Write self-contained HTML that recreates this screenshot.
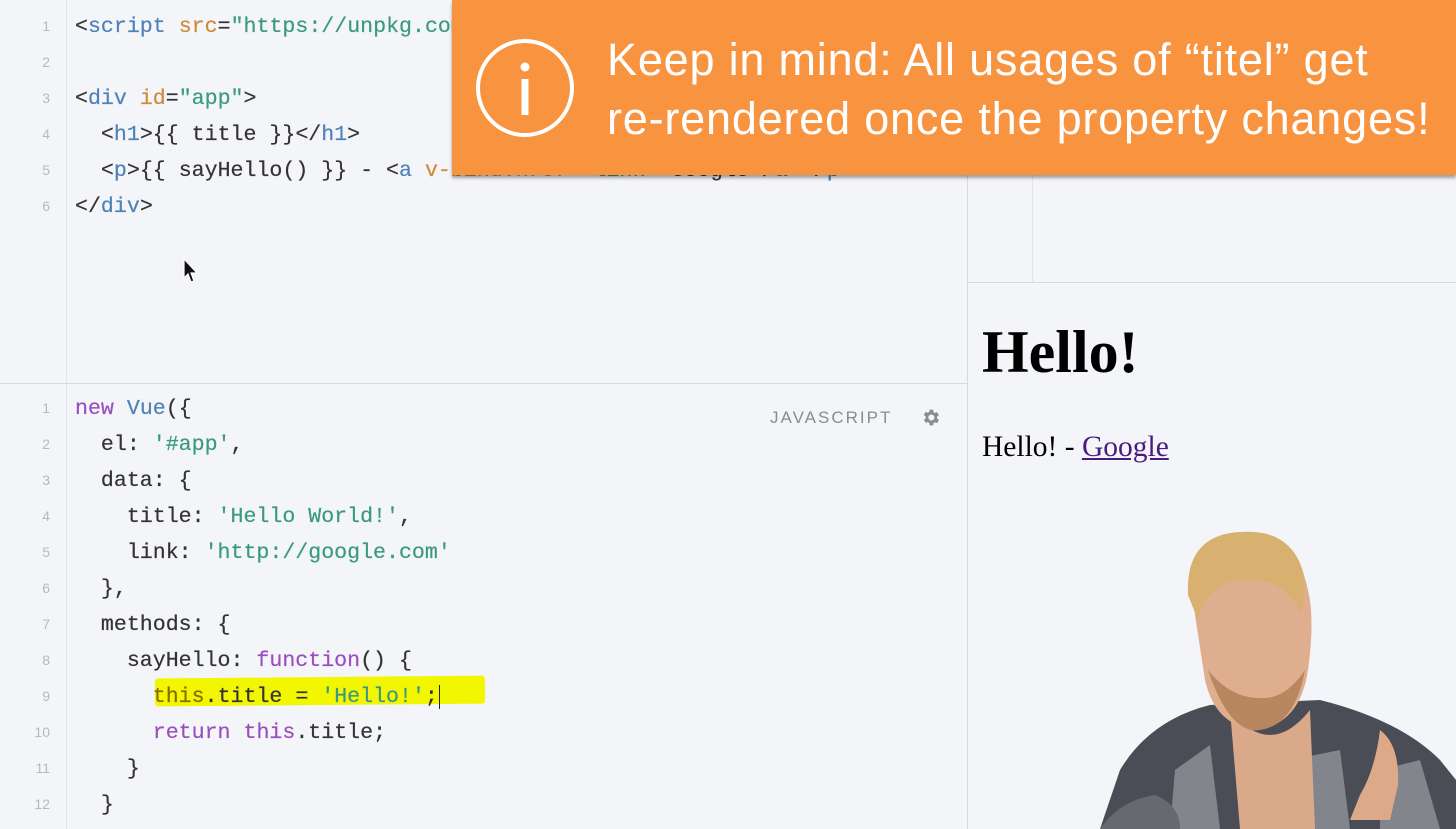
<!DOCTYPE html>
<html><head><style>
body{margin:0;width:1456px;height:829px;overflow:hidden;background:#f4f5f8;position:relative;font-family:"Liberation Mono",monospace}
.pane{position:absolute;left:0;width:967px;background:#f4f5f8}
.gut{position:absolute;left:0;top:0;bottom:0;width:66px;border-right:1px solid #e4e5e9}
.ln{position:absolute;left:0;width:50px;text-align:right;font-size:14px;color:#b8b9bd;font-family:"Liberation Sans",sans-serif}
.code{position:absolute;left:75px;font-size:21.6px;line-height:36px;color:#333;white-space:pre;-webkit-text-stroke:0.2px currentColor}
.t{color:#4f82b8}.a{color:#d08a3c}.s{color:#3a9a80}.k{color:#9b4fbf}.p{color:#555}
</style></head><body>
<div class="pane" style="top:0;height:383px;border-bottom:1px solid #d8d9dd">
<div class="gut"></div>
<div class="ln" style="top:18px">1</div><div class="ln" style="top:54px">2</div><div class="ln" style="top:90px">3</div><div class="ln" style="top:126px">4</div><div class="ln" style="top:162px">5</div><div class="ln" style="top:198px">6</div>
<div class="code" style="top:9px">&lt;<span class="t">script</span> <span class="a">src</span>=<span class="s">"https://unpkg.com/vue"</span>&gt;&lt;/<span class="t">script</span>&gt;

&lt;<span class="t">div</span> <span class="a">id</span>=<span class="s">"app"</span>&gt;
  &lt;<span class="t">h1</span>&gt;{{ title }}&lt;/<span class="t">h1</span>&gt;
  &lt;<span class="t">p</span>&gt;{{ sayHello() }} - &lt;<span class="t">a</span> <span class="a">v-bind:href</span>=<span class="s">"link"</span>&gt;Google&lt;/<span class="t">a</span>&gt;&lt;/<span class="t">p</span>&gt;
&lt;/<span class="t">div</span>&gt;</div>
<svg style="position:absolute;left:183px;top:258px" width="16" height="26" viewBox="0 0 16 26"><path d="M1 1 L1 20 L5 16 L8 24 L11 23 L8 15 L14 15 Z" fill="#111" stroke="#fff" stroke-width="1.2"/></svg>
</div>
<div class="pane" style="top:384px;height:445px">
<div class="gut"></div>
<div style="position:absolute;left:770px;top:24px;font-family:'Liberation Sans',sans-serif;font-size:17px;letter-spacing:2px;color:#8a8c92">JAVASCRIPT</div>
<svg style="position:absolute;left:920px;top:23px" width="21" height="21" viewBox="0 0 24 24"><path fill="#8a8c92" d="M19.4 13a7.5 7.5 0 0 0 0-2l2.1-1.6-2-3.5-2.5 1a7 7 0 0 0-1.7-1L15 3h-4l-.4 2.6a7 7 0 0 0-1.7 1l-2.5-1-2 3.5L6.6 11a7.5 7.5 0 0 0 0 2l-2.1 1.6 2 3.5 2.5-1a7 7 0 0 0 1.7 1L11 21h4l.4-2.6a7 7 0 0 0 1.7-1l2.5 1 2-3.5zM13 15.5a3.5 3.5 0 1 1 0-7 3.5 3.5 0 0 1 0 7z"/></svg>
<div style="position:absolute;left:155px;top:293px;width:330px;height:28px;background:#f2f600;transform:rotate(-0.5deg);border-radius:3px"></div>
<div class="ln" style="top:16px">1</div><div class="ln" style="top:52px">2</div><div class="ln" style="top:88px">3</div><div class="ln" style="top:124px">4</div><div class="ln" style="top:160px">5</div><div class="ln" style="top:196px">6</div><div class="ln" style="top:232px">7</div><div class="ln" style="top:268px">8</div><div class="ln" style="top:304px">9</div><div class="ln" style="top:340px">10</div><div class="ln" style="top:376px">11</div><div class="ln" style="top:412px">12</div>
<div class="code" style="top:7px"><span class="k">new</span> <span class="t">Vue</span>({
  el: <span class="s">'#app'</span>,
  data: {
    title: <span class="s">'Hello World!'</span>,
    link: <span class="s">'http://google.com'</span>
  },
  methods: {
    sayHello: <span class="k">function</span>() {
      <span class="k" style="color:#8a6a00">this</span>.title = <span class="s">'Hello!'</span>;<span style="border-left:1.5px solid #222;margin-left:1px"></span>
      <span class="k">return</span> <span class="k">this</span>.title;
    }
  }</div>
</div>
<div style="position:absolute;left:967px;top:0;width:489px;height:829px;background:#f4f5f8;border-left:1px solid #d8d9dd">
<div style="position:absolute;left:64px;top:0;height:282px;border-left:1px solid #e3e4e8"></div>
<div style="position:absolute;left:0;right:0;top:282px;border-top:1px solid #d8d9dd"></div>
<div style="position:absolute;left:14px;top:318px;font:bold 60px 'Liberation Serif',serif;color:#000">Hello!</div>
<div style="position:absolute;left:14px;top:431px;font:29.5px 'Liberation Serif',serif;color:#000">Hello! - <span style="color:#4a1a80;text-decoration:underline">Google</span></div>
</div>
<svg style="position:absolute;left:1080px;top:520px" width="376" height="309" viewBox="0 0 376 309">
<path d="M20 309 L40 250 Q70 200 130 185 L240 180 Q320 200 360 240 L376 260 L376 309Z" fill="#4a4d55"/>
<path d="M90 309 L95 250 L130 225 L140 309Z M200 309 L210 240 L260 230 L270 309Z M300 309 L300 250 L340 240 L360 309Z" fill="#9a9ca2" opacity=".7"/>
<path d="M150 190 Q190 240 230 190 L235 309 L160 309Z" fill="#d9a98a"/>
<path d="M115 95 Q112 30 160 20 Q215 10 228 70 Q235 100 228 150 Q220 205 175 210 Q135 205 125 160Z" fill="#dfae8e"/>
<path d="M128 150 Q150 215 180 210 Q215 205 225 150 Q205 180 180 178 Q150 178 128 150Z" fill="#b8875f"/>
<path d="M108 75 Q105 15 160 12 Q215 8 225 60 L222 95 Q205 55 160 60 Q125 65 118 100Z" fill="#d8b070"/>
<path d="M300 210 Q320 225 318 265 L310 300 L270 300 L280 275 Q295 250 300 210Z" fill="#dcaa88"/>
<path d="M20 309 Q40 280 75 275 Q100 285 100 309Z" fill="#666a70"/>
</svg>
<div style="position:absolute;left:452px;top:0;width:1004px;height:175px;background:#f89340;box-shadow:0 3px 3px rgba(0,0,0,.35)">
<svg style="position:absolute;left:22px;top:37px" width="102" height="102" viewBox="0 0 102 102"><circle cx="51" cy="51" r="47" fill="none" stroke="#fff" stroke-width="4"/><circle cx="51" cy="30" r="4.5" fill="#fff"/><rect x="47.5" y="42" width="7" height="36" fill="#fff"/></svg>
<div style="position:absolute;left:155px;top:30px;font:45px 'Liberation Sans',sans-serif;color:#fff;line-height:59px;letter-spacing:0.8px;white-space:nowrap">Keep in mind: All usages of “titel” get<br>re-rendered once the property changes!</div>
</div>
</body></html>
